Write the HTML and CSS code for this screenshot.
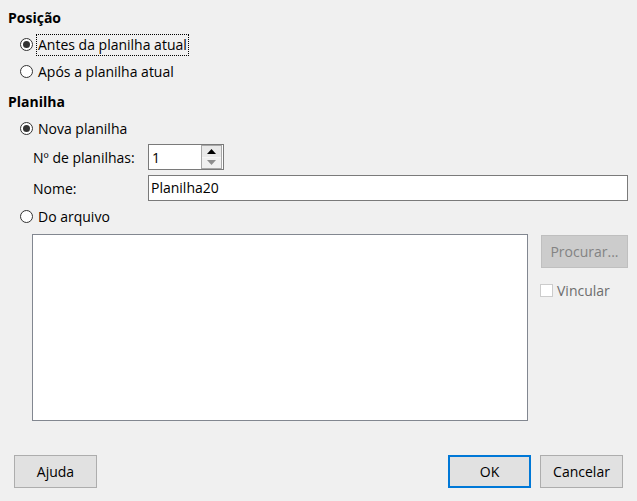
FILE: index.html
```html
<!DOCTYPE html>
<html lang="pt">
<head>
<meta charset="utf-8">
<title>Inserir planilha</title>
<link rel="stylesheet" href="styles.css">
</head>
<body>
<div class="dlg">
  <div class="heading">Posição</div>
  <div class="radio first"><span class="rb on"></span><span class="focus">Antes da planilha atual</span></div>
  <div class="radio"><span class="rb"></span><span class="txt">Após a planilha atual</span></div>

  <div class="heading second">Planilha</div>
  <div class="radio nova"><span class="rb on"></span><span class="txt">Nova planilha</span></div>

  <div class="field count">
    <span class="flabel">Nº de planilhas:</span>
    <div class="spin">
      <span class="spinval">1</span>
      <div class="spinbtns">
        <span class="sb up"><svg width="9" height="5" viewBox="0 0 9 5"><path d="M0 5 L4.5 0 L9 5 Z" fill="#000"/></svg></span>
        <span class="sb down"><svg width="9" height="5" viewBox="0 0 9 5"><path d="M0 0 L4.5 5 L9 0 Z" fill="#8e8e8e"/></svg></span>
      </div>
    </div>
  </div>
  <div class="field name">
    <span class="flabel">Nome:</span>
    <div class="input">Planilha20</div>
  </div>

  <div class="radio arq"><span class="rb"></span><span class="txt">Do arquivo</span></div>

  <div class="filearea">
    <div class="list"></div>
    <div class="side">
      <div class="btn disabled">Procurar...</div>
      <div class="check"><span class="cb"></span><span>Vincular</span></div>
    </div>
  </div>

  <div class="footer">
    <div class="btn wide">Ajuda</div>
    <div class="spacer"></div>
    <div class="btn wide default">OK</div>
    <div class="btn wide">Cancelar</div>
  </div>
</div>
</body>
</html>
```
FILE: styles.css
```css
html, body {
  margin: 0;
  padding: 0;
  background: #f0f0f0;
}
body {
  width: 637px;
  height: 501px;
  overflow: hidden;
  font-family: "Open Sans", "Noto Sans", sans-serif;
  font-size: 14px;
  color: #000;
}
.dlg {
  display: flex;
  flex-direction: column;
  padding: 8px 9px 0 8px;
}
.heading {
  height: 20px;
  line-height: 20px;
  font-weight: bold;
}
.heading.second {
  margin-top: 7px;
}
.radio {
  display: flex;
  align-items: center;
  height: 27px;
  padding-left: 12px;
}
.radio.first { margin-top: 3px; }
.radio.nova { margin-top: 3px; }
.radio.arq { margin-top: 2px; }
.rb {
  width: 11px;
  height: 11px;
  border: 1px solid #333;
  border-radius: 50%;
  background: #fff;
  margin-right: 5px;
  display: flex;
  align-items: center;
  justify-content: center;
  flex: none;
}
.rb.on::after {
  content: "";
  width: 7px;
  height: 7px;
  border-radius: 50%;
  background: #333;
}
.focus {
  outline: 1px dotted #000;
  outline-offset: 0;
  padding: 0 1px;
  margin-left: -1px;
  line-height: 20px;
}
.field {
  display: flex;
  align-items: center;
  height: 26px;
  padding-left: 25px;
}
.field.count { margin-top: 2px; }
.field.name { margin-top: 5px; }
.flabel {
  width: 115px;
  flex: none;
}
.spin {
  width: 74px;
  height: 24px;
  border: 1px solid #7a7a7a;
  background: #fff;
  display: flex;
  align-items: center;
  justify-content: space-between;
}
.spinval {
  padding-left: 3px;
}
.spinbtns {
  width: 19px;
  height: 22px;
  border: 1px solid #a8a8a8;
  margin-right: 1px;
  display: flex;
  flex-direction: column;
  background: #e6e6e6;
}
.sb {
  flex: 1;
  display: flex;
  align-items: center;
  justify-content: center;
}
.sb.up {
  background: #e9e9e9;
  border-bottom: 1px solid #f6f6f6;
}
.sb.down {
  background: #f0f0f0;
}
.input {
  flex: 1;
  height: 24px;
  line-height: 24px;
  border: 1px solid #7a7a7a;
  background: #fff;
  padding-left: 2px;
}
.filearea {
  display: flex;
  margin-top: 4px;
  padding-left: 24px;
}
.list {
  width: 494px;
  height: 185px;
  border: 1px solid #828790;
  background: #fff;
}
.side {
  margin-left: 13px;
  flex: 1;
  display: flex;
  flex-direction: column;
  padding-top: 1px;
}
.btn {
  height: 31px;
  border: 1px solid #adadad;
  background: #e1e1e1;
  display: flex;
  align-items: center;
  justify-content: center;
  box-sizing: content-box;
}
.btn.disabled {
  background: #cccccc;
  border-color: #bfbfbf;
  color: #838383;
}
.check {
  display: flex;
  align-items: center;
  margin-top: 15px;
  margin-left: -1px;
  color: #6d6d6d;
  height: 14px;
}
.cb {
  width: 11px;
  height: 11px;
  border: 1px solid #cccccc;
  background: #fff;
  margin-right: 4px;
}
.footer {
  display: flex;
  margin-top: 34px;
  padding: 0 5px 0 6px;
}
.btn.wide {
  width: 81px;
}
.spacer { flex: 1; }
.btn.default {
  border: 2px solid #0078d7;
  height: 29px;
  width: 79px;
  margin-right: 9px;
}
```
